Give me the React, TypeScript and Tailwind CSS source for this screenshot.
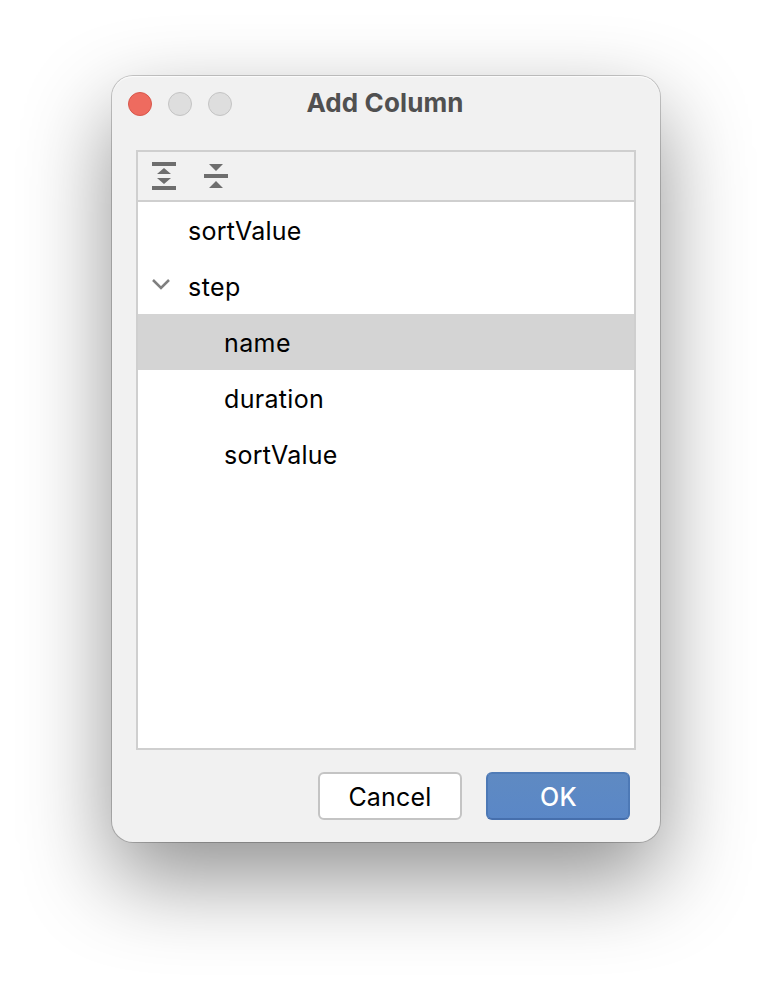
import React from "react";

type Row = { label: string; level: number; expanded?: boolean; selected?: boolean; spacing: string };

const rows: Row[] = [
  { label: "sortValue", level: 0, spacing: "tracking-[0.26px]" },
  { label: "step", level: 0, expanded: true, spacing: "tracking-[0.45px]" },
  { label: "name", level: 1, selected: true, spacing: "tracking-[0.4px]" },
  { label: "duration", level: 1, spacing: "tracking-[0.32px]" },
  { label: "sortValue", level: 1, spacing: "tracking-[0.26px]" },
];

function ExpandAllIcon() {
  return (
    <svg width="24" height="28" viewBox="0 0 24 28" fill="#6e6e6e">
      <path d="M0 0h24v4H0zM0 24h24v4H0zM12 6l7 6H5zM12 22l7-6H5z" />
    </svg>
  );
}

function CollapseAllIcon() {
  return (
    <svg width="24" height="28" viewBox="0 0 24 28" fill="#6e6e6e">
      <path d="M0 12h24v4H0zM12 9l7-7H5zM12 19l7 7H5z" />
    </svg>
  );
}

function TreeRow({ row }: { row: Row }) {
  return (
    <div className={"flex h-14 items-center pl-[14px] " + (row.selected ? "bg-[#d4d4d4]" : "")}>
      <div className={row.level === 0 ? "w-9 shrink-0" : "w-[72px] shrink-0"}>
        {row.expanded && (
          <svg className="mb-1" width="18" height="12" viewBox="0 0 18 12" fill="none" stroke="#7f7f7f" strokeWidth="2.5">
            <path d="M1 2l8 8 8-8" />
          </svg>
        )}
      </div>
      <span className={"whitespace-nowrap pt-0.5 " + row.spacing}>{row.label}</span>
    </div>
  );
}

export default function App() {
  return (
    <div className="flex h-[990px] w-[772px] overflow-hidden bg-white pl-[112px] pt-[76px] font-['Inter','Liberation_Sans',sans-serif] text-[25px] leading-8 text-black">
      <div className="flex h-[766px] w-[548px] flex-col rounded-[21px] bg-[#f1f1f1] shadow-[inset_0_1px_1px_rgba(255,255,255,0.8),0_0_0_1px_rgba(0,0,0,0.2),0_36px_88px_rgba(0,0,0,0.44)]">
        <header className="grid h-[74px] grid-cols-[1fr_auto_1fr] items-start">
          <div className="flex gap-4 pl-4 pt-4">
            <i className="size-6 rounded-full border border-[#d8574b] bg-[#ee6b5f]" />
            <i className="size-6 rounded-full border border-[#c4c4c4] bg-[#dedede]" />
            <i className="size-6 rounded-full border border-[#c4c4c4] bg-[#dedede]" />
          </div>
          <h1 className="whitespace-nowrap pr-0.5 pt-[11px] text-[26px] font-bold leading-8 tracking-[0.1px] text-[#505050]">Add Column</h1>
        </header>
        <main className="mx-6 flex h-[600px] flex-col border-2 border-[#cfcfcf] bg-white">
          <div className="flex h-[50px] shrink-0 items-center gap-7 border-b-2 border-[#cfcfcf] bg-[#f1f1f1] pl-[14px]">
            <ExpandAllIcon />
            <CollapseAllIcon />
          </div>
          {rows.map((row, i) => (
            <TreeRow key={i} row={row} />
          ))}
        </main>
        <footer className="flex justify-end gap-6 pr-[30px] pt-[22px]">
          <button className="h-12 w-36 rounded-md border-2 border-[#c4c4c4] bg-white pt-0.5 tracking-[0.2px]">Cancel</button>
          <button className="h-12 w-36 rounded-md border-2 border-x-[#4d79b6] border-t-[#507cb7] border-b-[#466fad] bg-linear-to-b from-[#5f8ac2] to-[#5a87c7] bg-origin-border pl-px pt-0.5 font-medium tracking-[0.2px] text-white">OK</button>
        </footer>
      </div>
    </div>
  );
}
